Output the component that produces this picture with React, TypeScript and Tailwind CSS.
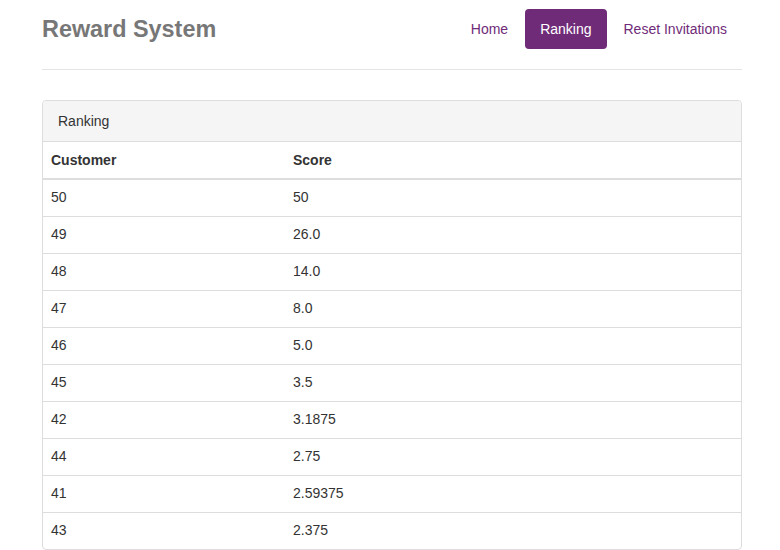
const rows: [string, string][] = [
  ["50", "50"],
  ["49", "26.0"],
  ["48", "14.0"],
  ["47", "8.0"],
  ["46", "5.0"],
  ["45", "3.5"],
  ["42", "3.1875"],
  ["44", "2.75"],
  ["41", "2.59375"],
  ["43", "2.375"],
];

function Header() {
  return (
    <div className="flex items-start justify-between border-b border-[#e5e5e5] h-[70px]">
      <h3 className="text-[23.4px] font-bold text-[#777] leading-[28px] mt-[15px]">
        Reward System
      </h3>
      <nav className="flex gap-[2px] mt-[9px]">
        <a className="px-[15px] h-[40px] flex items-center rounded text-[#6f2c78]">
          Home
        </a>
        <a className="px-[15px] h-[40px] flex items-center rounded bg-[#6f2b78] text-white">
          Ranking
        </a>
        <a className="px-[15px] h-[40px] flex items-center rounded text-[#6f2c78]">
          Reset Invitations
        </a>
      </nav>
    </div>
  );
}

function App() {
  return (
    <div className="min-h-screen bg-white text-[14px] text-[#333] font-['Liberation_Sans',Arial,sans-serif]">
      <div className="w-[700px] ml-[42px]">
        <Header />
        <div className="mt-[30px] border border-[#ddd] rounded">
          <div className="bg-[#f5f5f5] border-b border-[#ddd] h-[41px] px-[15px] flex items-center rounded-t">
            Ranking
          </div>
          <table className="w-full">
            <thead>
              <tr className="border-b-2 border-[#ddd]">
                <th className="text-left font-bold px-[8px] h-[37px] w-[242px]">Customer</th>
                <th className="text-left font-bold px-[8px] h-[37px]">Score</th>
              </tr>
            </thead>
            <tbody>
              {rows.map(([c, s], i) => (
                <tr key={i} className="border-b border-[#ddd] last:border-b-0">
                  <td className="px-[8px] h-[37px]">{c}</td>
                  <td className="px-[8px] h-[37px]">{s}</td>
                </tr>
              ))}
            </tbody>
          </table>
        </div>
      </div>
    </div>
  );
}

export default App;
